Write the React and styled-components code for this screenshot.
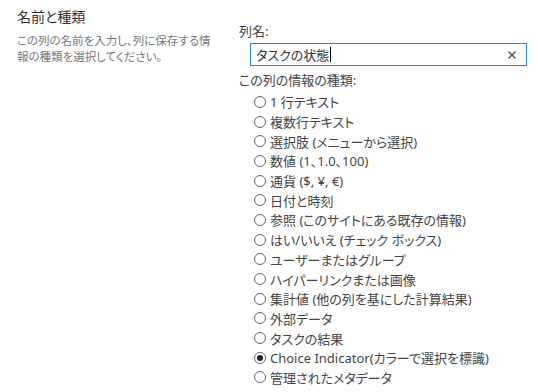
import React from "react";
import styled, { createGlobalStyle } from "styled-components";

const Global = createGlobalStyle`
  html, body { margin: 0; padding: 0; background: #fff; }
  body {
    font-family: "Noto Sans", "Noto Sans CJK JP", sans-serif;
    font-feature-settings: "palt";
    color: #333;
    width: 538px;
    height: 392px;
    overflow: hidden;
  }
`;

const Page = styled.div`
  display: flex;
  align-items: flex-start;
`;

const Left = styled.div`
  width: 201px;
  padding: 7px 0 0 17px;
  margin-right: 21px;
  box-sizing: content-box;
`;

const Title = styled.div`
  font-size: 14px;
  line-height: 20px;
  color: #333;
  margin-bottom: 6px;
`;

const Desc = styled.div`
  font-size: 11.5px;
  line-height: 16px;
  color: #777;
`;

const Right = styled.div`
  padding-top: 21px;
  flex: 1;
`;

const Label = styled.div`
  font-size: 13px;
  line-height: 20px;
  color: #444;
`;

const InputBox = styled.div`
  margin: 2px 11px 4px 11px;
  height: 23px;
  box-sizing: border-box;
  border: 1px solid #2b88d8;
  display: flex;
  align-items: center;
  padding: 0 10px 0 5px;
`;

const InputText = styled.span`
  font-size: 13px;
  color: #333;
  flex: 1;
  display: flex;
  align-items: center;
`;

const Caret = styled.span`
  display: inline-block;
  width: 1px;
  height: 15px;
  background: #000;
  margin-left: 1px;
`;

const ClearIcon = styled.svg`
  width: 8px;
  height: 8px;
  flex: none;
`;

const List = styled.div`
  padding-left: 15px;
  margin-top: 2px;
`;

const Row = styled.div`
  display: flex;
  align-items: center;
  height: 19.7px;
  font-size: 13px;
  color: #444;
`;

const Radio = styled.span`
  width: 12px;
  height: 12px;
  box-sizing: border-box;
  border-radius: 50%;
  border: 1px solid #666;
  margin-right: 4px;
  display: inline-flex;
  align-items: center;
  justify-content: center;
  flex: none;
  &::after {
    content: "";
    width: 6px;
    height: 6px;
    border-radius: 50%;
    background: ${(p) => (p.$checked ? "#222" : "transparent")};
  }
`;

const options = [
  "1 行テキスト",
  "複数行テキスト",
  "選択肢 (メニューから選択)",
  "数値 (1、1.0、100)",
  "通貨 ($, ¥, €)",
  "日付と時刻",
  "参照 (このサイトにある既存の情報)",
  "はい/いいえ (チェック ボックス)",
  "ユーザーまたはグループ",
  "ハイパーリンクまたは画像",
  "集計値 (他の列を基にした計算結果)",
  "外部データ",
  "タスクの結果",
  "Choice Indicator(カラーで選択を標識)",
  "管理されたメタデータ",
];

export default function App() {
  return (
    <>
      <Global />
      <Page>
        <Left>
          <Title>名前と種類</Title>
          <Desc>この列の名前を入力し、列に保存する情報の種類を選択してください。</Desc>
        </Left>
        <Right>
          <Label>列名:</Label>
          <InputBox>
            <InputText>
              タスクの状態
              <Caret />
            </InputText>
            <ClearIcon viewBox="0 0 8 8">
              <path d="M0.5 0.5 L7.5 7.5 M7.5 0.5 L0.5 7.5" stroke="#444" strokeWidth="1.2" />
            </ClearIcon>
          </InputBox>
          <Label>この列の情報の種類:</Label>
          <List>
            {options.map((o) => (
              <Row key={o}>
                <Radio $checked={o.startsWith("Choice")} />
                {o}
              </Row>
            ))}
          </List>
        </Right>
      </Page>
    </>
  );
}
